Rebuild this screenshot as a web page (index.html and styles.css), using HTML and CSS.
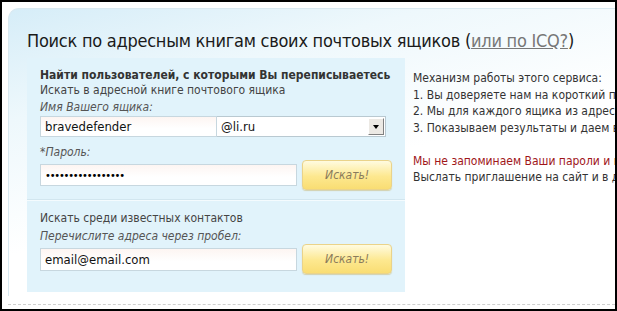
FILE: index.html
```html
<!DOCTYPE html>
<html lang="ru">
<head>
    <meta charset="UTF-8">
    <title>Поиск по адресным книгам</title>
    <link rel="stylesheet" href="styles.css">
</head>
<body>
    <div class="frame">
        <div class="box">
            <h1>Поиск по адресным книгам своих почтовых ящиков (<a href="#">или по ICQ?</a>)</h1>
            <div class="cols">
                <form class="panel">
                    <div class="group">
                        <div class="lead">Найти пользователей, с которыми Вы переписываетесь</div>
                        <div class="sub">Искать в адресной книге почтового ящика</div>
                        <div class="label">Имя Вашего ящика:</div>
                        <div class="row">
                            <input class="field field-name" type="text" value="bravedefender">
                            <div class="select">@li.ru<span class="arrow"></span></div>
                        </div>
                        <div class="label label-gap">*Пароль:</div>
                        <div class="row">
                            <input class="field field-wide field-pass" type="password" value="bravedefender2008">
                            <button type="button" class="btn">Искать!</button>
                        </div>
                    </div>
                    <div class="group group-last">
                        <div class="sub">Искать среди известных контактов</div>
                        <div class="label">Перечислите адреса через пробел:</div>
                        <div class="row">
                            <input class="field field-wide field-tall" type="text" value="email@email.com">
                            <button type="button" class="btn">Искать!</button>
                        </div>
                    </div>
                </form>
                <div class="info">
                    <p>Механизм работы этого сервиса:</p>
                    <p>1. Вы доверяете нам на короткий промежуток времени свой пароль</p>
                    <p>2. Мы для каждого ящика из адресной книги ищем пользователя</p>
                    <p>3. Показываем результаты и даем возможность добавить в друзья</p>
                    <p class="blank">&nbsp;</p>
                    <p class="warn">Мы не запоминаем Ваши пароли и не рассылаем спам</p>
                    <p>Выслать приглашение на сайт и в друзья остальным</p>
                </div>
            </div>
        </div>
        <div class="dashed"></div>
    </div>
</body>
</html>
```

FILE: styles.css
```css
* {margin:0;padding:0;box-sizing:border-box;}
body {font-family:"DejaVu Sans Condensed","DejaVu Sans",sans-serif;font-size:12px;color:#333;background:#fff;}
.frame {width:617px;height:311px;border:2px solid #000;overflow:hidden;background:#fff;position:relative;}
.box {margin:6px 0 0 6px;height:288px;border-top:1px solid #d9e9f1;border-left:1px solid #d9e9f1;border-top-left-radius:11px;padding-left:18px;background:linear-gradient(165deg,#d6edf8 0,#eef8fc 25%,#fff 55%);}
h1 {font-weight:normal;font-size:18px;letter-spacing:-.25px;line-height:24px;color:#1a1a1a;padding-top:20px;height:49px;white-space:nowrap;}
h1 a {color:#777;text-decoration:underline;}
.cols {display:flex;gap:8px;}
.panel {width:378px;height:234px;background:#e1f3fb;flex:none;}
.group {padding:9px 13px 9px;border-bottom:1px solid #d2e6ef;box-shadow:0 1px 0 #f4fbfe;}
.group-last {border-bottom:none;box-shadow:none;padding-top:10px;}
.lead {font-weight:bold;line-height:16px;color:#333;white-space:nowrap;}
.sub {line-height:14px;color:#444;}
.group-last .sub {line-height:16px;}
.label {font-style:italic;color:#555;line-height:16px;margin-top:2px;}
.label-gap {margin-top:7px;}
.row {display:flex;align-items:center;}
.field {font-family:inherit;font-size:13px;color:#111;border:1px solid #c7d7df;background:linear-gradient(to bottom,#fdf5f2,#fff 60%);padding:0 4px;outline:none;}
.field-name {width:177px;height:21px;margin-top:1px;}
.field-wide {width:258px;height:22px;}
.field-pass {font-size:11px;letter-spacing:-1.2px;color:#000;}
.field-tall {height:23px;}
.select {width:169px;height:21px;margin-top:1px;border:1px solid #b9c9d1;border-left:none;background:#fff;font-size:13px;color:#111;line-height:19px;padding-left:4px;position:relative;}
.arrow {position:absolute;right:1px;top:1px;width:16px;height:17px;background:#ece9e4;border:1px solid;border-color:#fff #808080 #808080 #fff;}
.arrow::after {content:"";position:absolute;left:4px;top:6px;border:3.5px solid transparent;border-top:4px solid #000;border-bottom:none;}
.btn {margin-left:5px;width:90px;height:30px;border:1px solid #ead38a;border-radius:4px;background:linear-gradient(to bottom,#fffbe0,#fde88f 55%,#f9dd73);box-shadow:0 1px 1px rgba(190,160,60,.4);font-family:inherit;font-style:italic;font-size:12px;color:#8a7b5c;}
.info {padding-top:12px;white-space:nowrap;}
.info p {line-height:16.5px;}
.warn {color:#a0161a;}
.dashed {position:absolute;left:6px;right:0;top:302px;border-top:1px dashed #cfcfcf;}
```
